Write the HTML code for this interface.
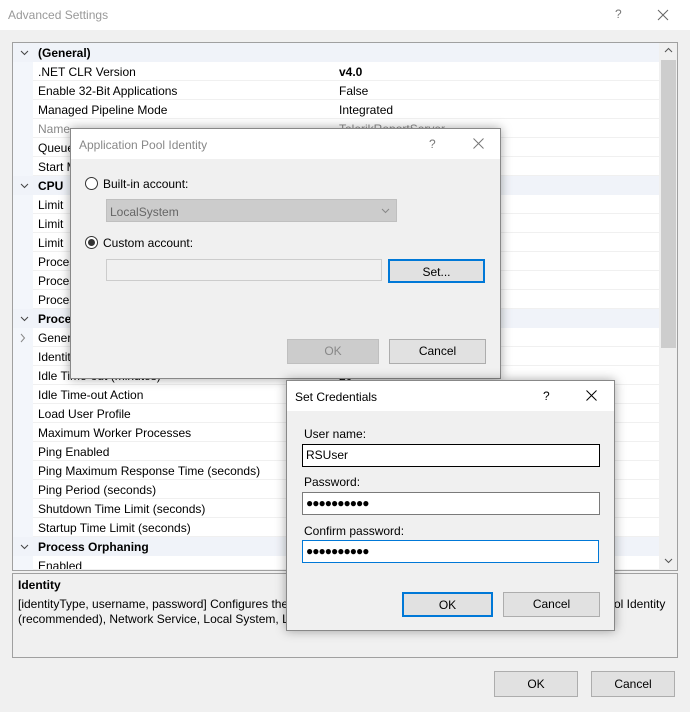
<!DOCTYPE html>
<html><head><style>
*{box-sizing:border-box;margin:0;padding:0}
body{width:690px;height:712px;background:#f0f0f0;font-family:"Liberation Sans",sans-serif;font-size:12px;color:#000;position:relative;overflow:hidden}
.abs{position:absolute}
.row{position:absolute;left:33px;width:626px;height:19px;border-bottom:1px solid #f0f0f0;background:#fff}
.row span{position:absolute;top:3px;left:5px;white-space:nowrap}
.row .v{left:306px}
.cat{position:absolute;left:13px;width:646px;height:19px;background:#f0f3f9;font-weight:bold}
.cat span{position:absolute;top:3px;left:25px}
.cat svg{position:absolute;left:7px;top:7px}
.btn{position:absolute;background:#e1e1e1;border:1px solid #adadad;text-align:center;line-height:22px}
.dlg{position:absolute;background:#f0f0f0;border:1px solid #888;box-shadow:0 0 10px rgba(0,0,0,.35)}
.tb{position:absolute;left:0;top:0;right:0;height:30px;background:#fff}
.inp{position:absolute;background:#fff;border:1px solid #7a7a7a;height:23px;padding-left:3px;line-height:21px}
</style></head><body>
<div class="abs" style="left:0;top:0;width:690px;height:30px;background:#fff"></div>
<div class="abs" style="left:8px;top:8px;color:#999;font-size:12px">Advanced Settings</div>
<div class="abs" style="left:615px;top:7px;color:#777">?</div>
<svg class="abs" style="left:657px;top:9px" width="12" height="12"><path d="M1 1L11 11M11 1L1 11" stroke="#666" stroke-width="1"/></svg>

<div class="abs" style="left:12px;top:42px;width:666px;height:529px;border:1px solid #a0a0a0;background:#f3f6fb"></div>
<div class="cat" style="top:43px"><svg width="9" height="6"><path d="M1 1L4.5 4.5L8 1" stroke="#444" fill="none"/></svg><span>(General)</span></div>
<div class="row" style="top:62px"><span>.NET CLR Version</span><span class="v" style="font-weight:bold">v4.0</span></div>
<div class="row" style="top:81px"><span>Enable 32-Bit Applications</span><span class="v">False</span></div>
<div class="row" style="top:100px"><span>Managed Pipeline Mode</span><span class="v">Integrated</span></div>
<div class="row" style="top:119px;color:#888"><span>Name</span><span class="v">TelerikReportServer</span></div>
<div class="row" style="top:138px"><span>Queue Length</span></div>
<div class="row" style="top:157px"><span>Start Mode</span></div>
<div class="cat" style="top:176px"><svg width="9" height="6"><path d="M1 1L4.5 4.5L8 1" stroke="#444" fill="none"/></svg><span>CPU</span></div>
<div class="row" style="top:195px"><span>Limit</span></div>
<div class="row" style="top:214px"><span>Limit</span></div>
<div class="row" style="top:233px"><span>Limit</span></div>
<div class="row" style="top:252px"><span>Process</span></div>
<div class="row" style="top:271px"><span>Process</span></div>
<div class="row" style="top:290px"><span>Process</span></div>
<div class="cat" style="top:309px"><svg width="9" height="6"><path d="M1 1L4.5 4.5L8 1" stroke="#444" fill="none"/></svg><span>Process Model</span></div>
<div class="row" style="top:328px"><span>Generate</span></div>
<svg class="abs" style="left:20px;top:333px" width="6" height="10"><path d="M1 1L4.5 5L1 9" stroke="#888" fill="none"/></svg>
<div class="row" style="top:347px"><span>Identity</span></div>
<div class="row" style="top:366px"><span>Idle Time-out (minutes)</span><span class="v">20</span></div>
<div class="row" style="top:385px"><span>Idle Time-out Action</span></div>
<div class="row" style="top:404px"><span>Load User Profile</span></div>
<div class="row" style="top:423px"><span>Maximum Worker Processes</span></div>
<div class="row" style="top:442px"><span>Ping Enabled</span></div>
<div class="row" style="top:461px"><span>Ping Maximum Response Time (seconds)</span></div>
<div class="row" style="top:480px"><span>Ping Period (seconds)</span></div>
<div class="row" style="top:499px"><span>Shutdown Time Limit (seconds)</span></div>
<div class="row" style="top:518px"><span>Startup Time Limit (seconds)</span></div>
<div class="cat" style="top:537px"><svg width="9" height="6"><path d="M1 1L4.5 4.5L8 1" stroke="#444" fill="none"/></svg><span>Process Orphaning</span></div>
<div class="row" style="top:556px;height:14px;overflow:hidden"><span>Enabled</span></div>
<div class="abs" style="left:659px;top:43px;width:18px;height:527px;background:#f0f0f0"></div>
<div class="abs" style="left:661px;top:60px;width:15px;height:288px;background:#cdcdcd"></div>
<svg class="abs" style="left:664px;top:47px" width="9" height="6"><path d="M1 5L4.5 1.5L8 5" stroke="#555" fill="none"/></svg>
<svg class="abs" style="left:664px;top:558px" width="9" height="6"><path d="M1 1L4.5 4.5L8 1" stroke="#555" fill="none"/></svg>

<div class="abs" style="left:12px;top:573px;width:666px;height:85px;border:1px solid #a0a0a0;background:#f0f0f0"></div>
<div class="abs" style="left:18px;top:578px;font-weight:bold">Identity</div>
<div class="abs" style="left:18px;top:597px;white-space:nowrap">[identityType, username, password] Configures the</div>
<div class="abs" style="left:18px;top:612px;white-space:nowrap">(recommended), Network Service, Local System, Lo</div>
<div class="abs" style="left:614px;top:597px">ol Identity</div>
<div class="btn" style="left:494px;top:671px;width:84px;height:26px;line-height:24px">OK</div>
<div class="btn" style="left:591px;top:671px;width:84px;height:26px;line-height:24px">Cancel</div>

<div class="dlg" style="left:70px;top:128px;width:431px;height:251px">
<div class="tb"></div>
<div class="abs" style="left:8px;top:9px;color:#888">Application Pool Identity</div>
<div class="abs" style="left:358px;top:8px;color:#777">?</div>
<svg class="abs" style="left:402px;top:9px" width="11" height="11"><path d="M0.5 0.5L10.5 10.5M10.5 0.5L0.5 10.5" stroke="#777"/></svg>
<div class="abs" style="left:14px;top:48px;width:13px;height:13px;border:1px solid #333;border-radius:50%;background:#fff"></div>
<div class="abs" style="left:32px;top:48px">Built-in account:</div>
<div class="abs" style="left:35px;top:70px;width:291px;height:23px;background:#cccccc;border:1px solid #bfbfbf;color:#666;padding:5px 3px">LocalSystem<svg style="position:absolute;right:6px;top:8px" width="9" height="6"><path d="M1 1L4.5 4.5L8 1" stroke="#888" fill="none"/></svg></div>
<div class="abs" style="left:14px;top:107px;width:13px;height:13px;border:1px solid #333;border-radius:50%;background:#fff"><div style="margin:2px;width:7px;height:7px;border-radius:50%;background:#333"></div></div>
<div class="abs" style="left:32px;top:107px">Custom account:</div>
<div class="abs" style="left:35px;top:130px;width:276px;height:22px;background:#f0f0f0;border:1px solid #ccc"></div>
<div class="btn" style="left:317px;top:130px;width:97px;height:24px;border:2px solid #0078d7">Set...</div>
<div class="btn" style="left:216px;top:210px;width:92px;height:25px;background:#ccc;border-color:#bfbfbf;color:#888">OK</div>
<div class="btn" style="left:318px;top:210px;width:97px;height:25px">Cancel</div>
</div>

<div class="dlg" style="left:286px;top:380px;width:329px;height:251px">
<div class="tb"></div>
<div class="abs" style="left:8px;top:9px">Set Credentials</div>
<div class="abs" style="left:256px;top:8px">?</div>
<svg class="abs" style="left:299px;top:9px" width="11" height="11"><path d="M0.5 0.5L10.5 10.5M10.5 0.5L0.5 10.5" stroke="#000"/></svg>
<div class="abs" style="left:17px;top:46px">User name:</div>
<div class="inp" style="left:15px;top:63px;width:298px;border-color:#000">RSUser</div>
<div class="abs" style="left:17px;top:94px">Password:</div>
<div class="inp" style="left:15px;top:111px;width:298px;letter-spacing:-1px;font-size:12px">●●●●●●●●●●</div>
<div class="abs" style="left:17px;top:143px">Confirm password:</div>
<div class="inp" style="left:15px;top:159px;width:297px;border-color:#0078d7;letter-spacing:-1px;font-size:12px">●●●●●●●●●●</div>
<div class="btn" style="left:115px;top:211px;width:91px;height:25px;border:2px solid #0078d7">OK</div>
<div class="btn" style="left:216px;top:211px;width:97px;height:25px">Cancel</div>
</div>
</body></html>
